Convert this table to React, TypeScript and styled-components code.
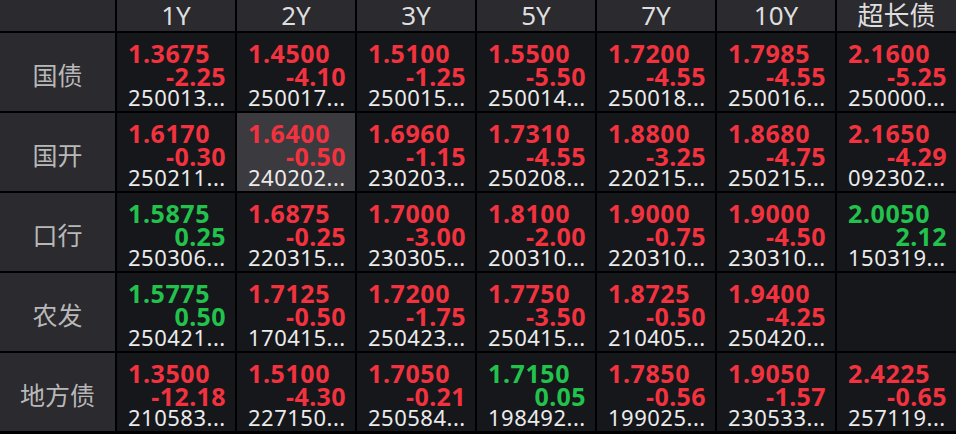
import React from "react";
import styled, { createGlobalStyle } from "styled-components";

const Global = createGlobalStyle`
  html, body { margin: 0; padding: 0; background: #000; }
  body { font-family: "Noto Sans", "Noto Sans CJK SC", sans-serif; }
`;

const Grid = styled.div`
  display: grid;
  grid-template-columns: 115px repeat(6, 118px) 1fr;
  grid-template-rows: 31px repeat(5, 78px);
  gap: 2px;
  width: 956px;
  height: 434px;
  background: #000;
  align-content: start;
`;

const HeadCell = styled.div`
  background: #2b2a2f;
  color: #dedede;
  font-size: 26px;
  line-height: 1;
  display: flex;
  align-items: center;
  justify-content: center;
  padding-bottom: 1px;
  box-sizing: border-box;
  font-family: "Noto Sans", "Noto Sans CJK SC", sans-serif;
`;

const RowLabel = styled.div`
  background: #2b2a2f;
  color: #b8b8b8;
  font-size: 25px;
  display: flex;
  align-items: center;
  justify-content: center;
  padding-top: 4px;
  box-sizing: border-box;
  font-family: "Noto Sans CJK SC", sans-serif;
`;

const Cell = styled.div<{ $active?: boolean }>`
  background: ${(p) => (p.$active ? "#3b3a3e" : "#15171b")};
  display: flex;
  flex-direction: column;
  padding: 8px 9px 0 11px;
  box-sizing: border-box;
  overflow: hidden;
`;

const Value = styled.div<{ $up?: boolean }>`
  color: ${(p) => (p.$up ? "#23c24c" : "#f2323e")};
  font-weight: 700;
  font-size: 25px;
  letter-spacing: 0.6px;
  line-height: 24px;
`;

const Change = styled(Value)`
  text-align: right;
  line-height: 22px;
  letter-spacing: 0.4px;
`;

const Code = styled.div`
  color: #ebebeb;
  font-size: 22px;
  letter-spacing: 0.5px;
  line-height: 21px;
  white-space: nowrap;
`;

type Q = [string, string, string] | null;

const headers = ["1Y", "2Y", "3Y", "5Y", "7Y", "10Y", "超长债"];

const rows: { label: string; cells: Q[] }[] = [
  {
    label: "国债",
    cells: [
      ["1.3675", "-2.25", "250013..."],
      ["1.4500", "-4.10", "250017..."],
      ["1.5100", "-1.25", "250015..."],
      ["1.5500", "-5.50", "250014..."],
      ["1.7200", "-4.55", "250018..."],
      ["1.7985", "-4.55", "250016..."],
      ["2.1600", "-5.25", "250000..."],
    ],
  },
  {
    label: "国开",
    cells: [
      ["1.6170", "-0.30", "250211..."],
      ["1.6400", "-0.50", "240202..."],
      ["1.6960", "-1.15", "230203..."],
      ["1.7310", "-4.55", "250208..."],
      ["1.8800", "-3.25", "220215..."],
      ["1.8680", "-4.75", "250215..."],
      ["2.1650", "-4.29", "092302..."],
    ],
  },
  {
    label: "口行",
    cells: [
      ["1.5875", "0.25", "250306..."],
      ["1.6875", "-0.25", "220315..."],
      ["1.7000", "-3.00", "230305..."],
      ["1.8100", "-2.00", "200310..."],
      ["1.9000", "-0.75", "220310..."],
      ["1.9000", "-4.50", "230310..."],
      ["2.0050", "2.12", "150319..."],
    ],
  },
  {
    label: "农发",
    cells: [
      ["1.5775", "0.50", "250421..."],
      ["1.7125", "-0.50", "170415..."],
      ["1.7200", "-1.75", "250423..."],
      ["1.7750", "-3.50", "250415..."],
      ["1.8725", "-0.50", "210405..."],
      ["1.9400", "-4.25", "250420..."],
      null,
    ],
  },
  {
    label: "地方债",
    cells: [
      ["1.3500", "-12.18", "210583..."],
      ["1.5100", "-4.30", "227150..."],
      ["1.7050", "-0.21", "250584..."],
      ["1.7150", "0.05", "198492..."],
      ["1.7850", "-0.56", "199025..."],
      ["1.9050", "-1.57", "230533..."],
      ["2.4225", "-0.65", "257119..."],
    ],
  },
];

export default function App() {
  return (
    <>
      <Global />
      <Grid>
        <HeadCell />
        {headers.map((h) => (
          <HeadCell key={h}>{h}</HeadCell>
        ))}
        {rows.map((r, ri) => (
          <React.Fragment key={r.label}>
            <RowLabel>{r.label}</RowLabel>
            {r.cells.map((c, ci) => {
              const up = c ? !c[1].startsWith("-") : false;
              return (
                <Cell key={ci} $active={ri === 1 && ci === 1}>
                  {c && (
                    <>
                      <Value $up={up}>{c[0]}</Value>
                      <Change $up={up}>{c[1]}</Change>
                      <Code>{c[2]}</Code>
                    </>
                  )}
                </Cell>
              );
            })}
          </React.Fragment>
        ))}
      </Grid>
    </>
  );
}
